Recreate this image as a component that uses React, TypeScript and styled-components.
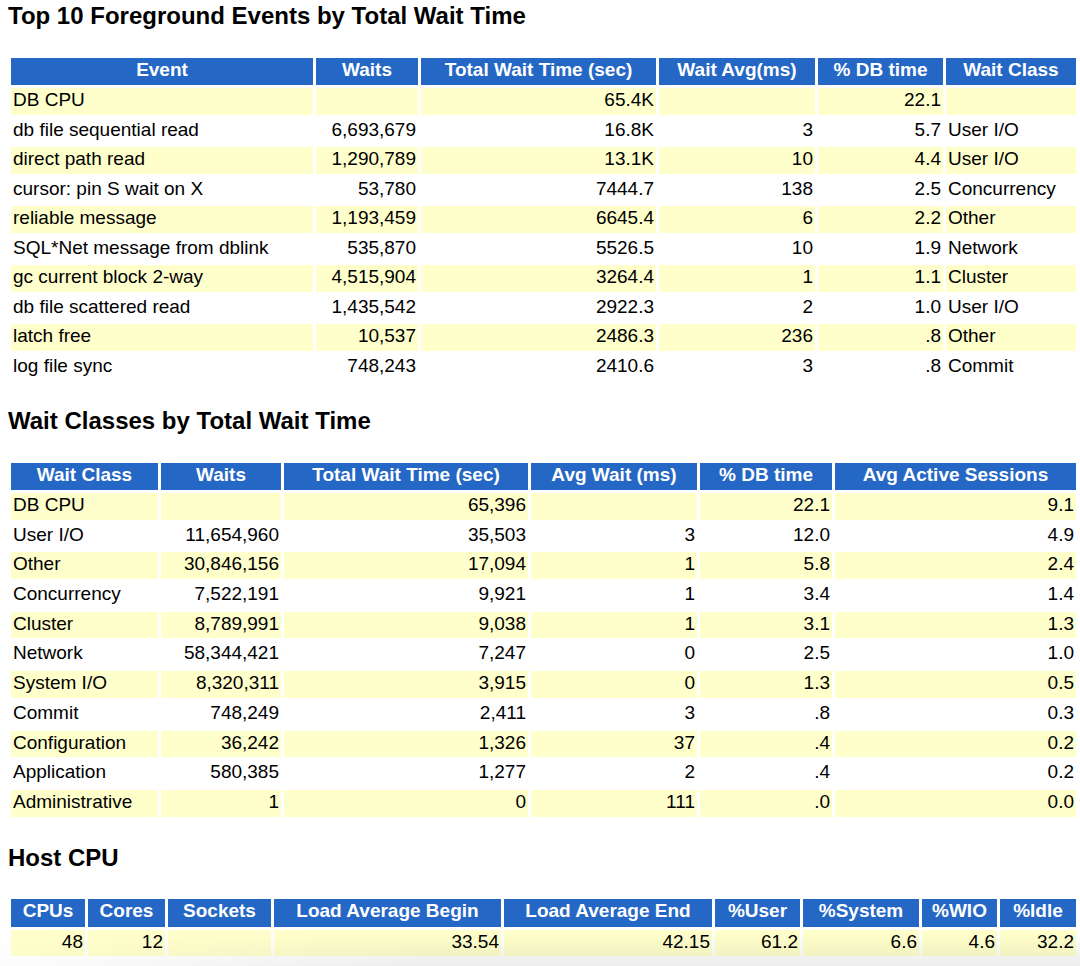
import React from "react";
import styled, { createGlobalStyle } from "styled-components";

const GlobalStyle = createGlobalStyle`
  html, body {
    margin: 0;
    padding: 0;
    background: #fff;
    overflow: hidden;
  }
  body {
    font-family: "Liberation Sans", Arial, Helvetica, sans-serif;
    color: #000;
  }
`;

const Page = styled.div`
  display: flex;
  flex-direction: column;
  gap: 26px;
  padding: 2px 0 0 8px;
  height: 966px;
  box-sizing: border-box;
`;

const Section = styled.section<{ $push?: number }>`
  display: flex;
  flex-direction: column;
  gap: 27.5px;
  margin-top: ${({ $push }) => $push ?? 0}px;
`;

const Title = styled.h2`
  margin: 0;
  font-size: 24px;
  line-height: 28px;
  font-weight: bold;
`;

const Grid = styled.div<{ $cols: number[]; $row: number }>`
  display: grid;
  grid-template-columns: ${({ $cols }) => $cols.map((c) => `${c}px`).join(" ")};
  grid-template-rows: 27.5px;
  grid-auto-rows: ${({ $row }) => $row}px;
  gap: 3px;
  margin-left: 3px;
  font-size: 19px;
`;

const HeadCell = styled.div`
  background: #2567c5;
  color: #fff;
  font-weight: bold;
  text-align: center;
  line-height: 24px;
  padding: 0 2px;
  white-space: nowrap;
  overflow: hidden;
`;

const Cell = styled.div<{ $alt: boolean; $align: "left" | "right" }>`
  background: ${({ $alt }) => ($alt ? "#ffffcc" : "#fff")};
  text-align: ${({ $align }) => $align};
  line-height: 24px;
  padding: 0 2px;
  white-space: nowrap;
  overflow: hidden;
`;

const Shade = styled.div`
  position: fixed;
  left: 0;
  right: 0;
  bottom: 0;
  height: 34px;
  pointer-events: none;
  background: linear-gradient(to bottom, rgba(0, 0, 0, 0), rgba(0, 0, 0, 0.07));
  -webkit-mask-image: linear-gradient(to right, rgba(0, 0, 0, 0.15), #000 40%);
  mask-image: linear-gradient(to right, rgba(0, 0, 0, 0.15), #000 40%);
`;

type Col = { title: string; width: number; align: "left" | "right" };

type TableProps = { cols: Col[]; rows: string[][]; rowHeight?: number };

const DataTable = ({ cols, rows, rowHeight = 26.5 }: TableProps) => (
  <Grid $cols={cols.map((c) => c.width)} $row={rowHeight}>
    {cols.map((c) => (
      <HeadCell key={c.title}>{c.title}</HeadCell>
    ))}
    {rows.map((row, i) =>
      row.map((v, j) => (
        <Cell key={`${i}-${j}`} $alt={i % 2 === 0} $align={cols[j].align}>
          {v}
        </Cell>
      ))
    )}
  </Grid>
);

const eventCols: Col[] = [
  { title: "Event", width: 302, align: "left" },
  { title: "Waits", width: 102, align: "right" },
  { title: "Total Wait Time (sec)", width: 235, align: "right" },
  { title: "Wait Avg(ms)", width: 156, align: "right" },
  { title: "% DB time", width: 125, align: "right" },
  { title: "Wait Class", width: 130, align: "left" },
];

const eventRows = [
  ["DB CPU", "", "65.4K", "", "22.1", ""],
  ["db file sequential read", "6,693,679", "16.8K", "3", "5.7", "User I/O"],
  ["direct path read", "1,290,789", "13.1K", "10", "4.4", "User I/O"],
  ["cursor: pin S wait on X", "53,780", "7444.7", "138", "2.5", "Concurrency"],
  ["reliable message", "1,193,459", "6645.4", "6", "2.2", "Other"],
  ["SQL*Net message from dblink", "535,870", "5526.5", "10", "1.9", "Network"],
  ["gc current block 2-way", "4,515,904", "3264.4", "1", "1.1", "Cluster"],
  ["db file scattered read", "1,435,542", "2922.3", "2", "1.0", "User I/O"],
  ["latch free", "10,537", "2486.3", "236", ".8", "Other"],
  ["log file sync", "748,243", "2410.6", "3", ".8", "Commit"],
];

const classCols: Col[] = [
  { title: "Wait Class", width: 147, align: "left" },
  { title: "Waits", width: 120, align: "right" },
  { title: "Total Wait Time (sec)", width: 244, align: "right" },
  { title: "Avg Wait (ms)", width: 166, align: "right" },
  { title: "% DB time", width: 132, align: "right" },
  { title: "Avg Active Sessions", width: 241, align: "right" },
];

const classRows = [
  ["DB CPU", "", "65,396", "", "22.1", "9.1"],
  ["User I/O", "11,654,960", "35,503", "3", "12.0", "4.9"],
  ["Other", "30,846,156", "17,094", "1", "5.8", "2.4"],
  ["Concurrency", "7,522,191", "9,921", "1", "3.4", "1.4"],
  ["Cluster", "8,789,991", "9,038", "1", "3.1", "1.3"],
  ["Network", "58,344,421", "7,247", "0", "2.5", "1.0"],
  ["System I/O", "8,320,311", "3,915", "0", "1.3", "0.5"],
  ["Commit", "748,249", "2,411", "3", ".8", "0.3"],
  ["Configuration", "36,242", "1,326", "37", ".4", "0.2"],
  ["Application", "580,385", "1,277", "2", ".4", "0.2"],
  ["Administrative", "1", "0", "111", ".0", "0.0"],
];

const cpuCols: Col[] = [
  { title: "CPUs", width: 74, align: "right" },
  { title: "Cores", width: 77, align: "right" },
  { title: "Sockets", width: 103, align: "right" },
  { title: "Load Average Begin", width: 227, align: "right" },
  { title: "Load Average End", width: 208, align: "right" },
  { title: "%User", width: 85, align: "right" },
  { title: "%System", width: 116, align: "right" },
  { title: "%WIO", width: 75, align: "right" },
  { title: "%Idle", width: 76, align: "right" },
];

const cpuRows = [["48", "12", "", "33.54", "42.15", "61.2", "6.6", "4.6", "32.2"]];

export default function App() {
  return (
    <>
      <GlobalStyle />
      <Page>
        <Section>
          <Title>Top 10 Foreground Events by Total Wait Time</Title>
          <DataTable cols={eventCols} rows={eventRows} />
        </Section>
        <Section $push={1}>
          <Title>Wait Classes by Total Wait Time</Title>
          <DataTable cols={classCols} rows={classRows} rowHeight={26.7} />
        </Section>
        <Section $push={1}>
          <Title>Host CPU</Title>
          <DataTable cols={cpuCols} rows={cpuRows} />
        </Section>
      </Page>
      <Shade />
    </>
  );
}
